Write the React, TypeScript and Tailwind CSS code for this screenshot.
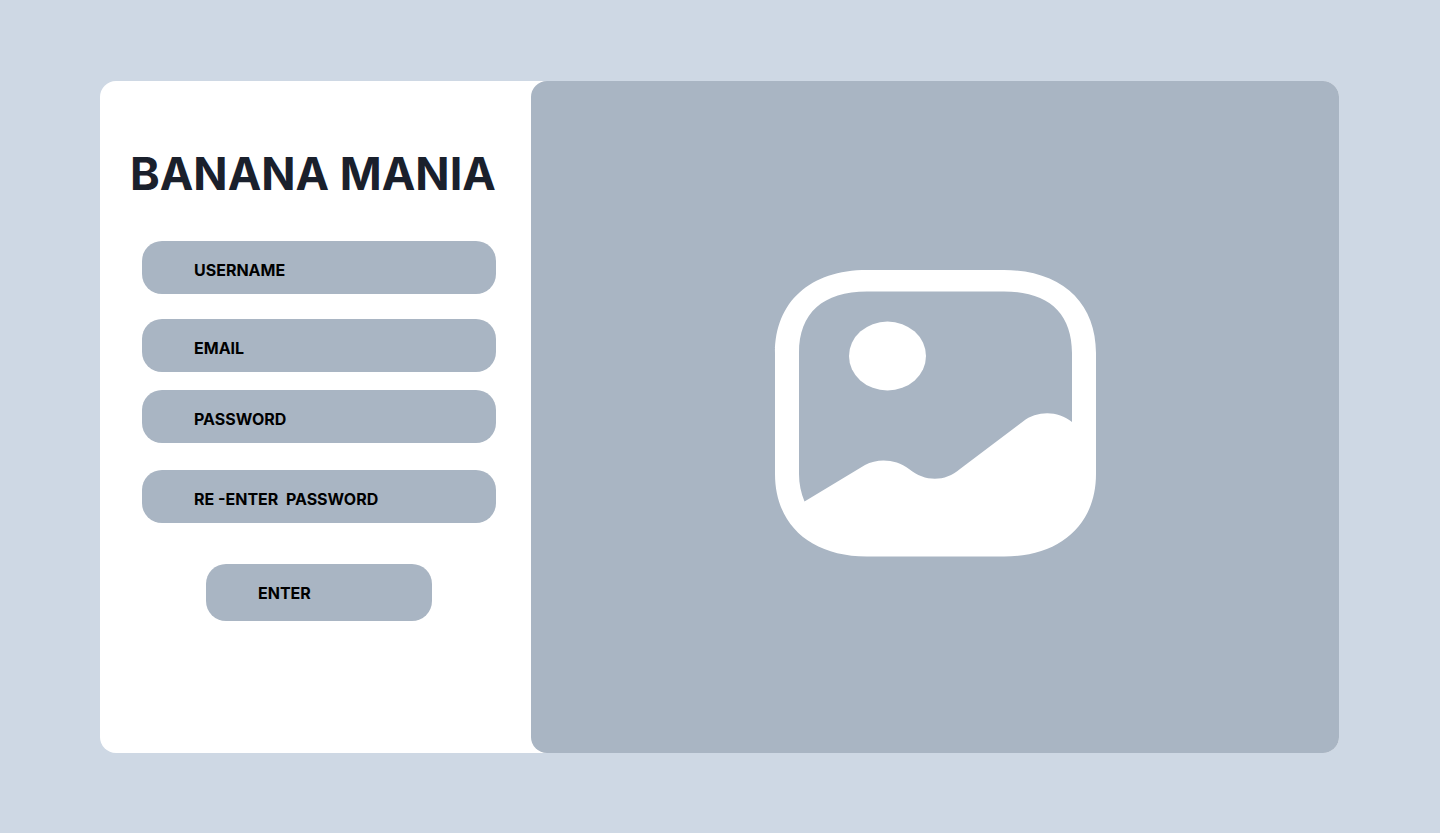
const field =
  "h-[53px] w-full rounded-[20px] bg-[#a9b5c3] pl-13 pr-5 pt-1 text-base font-bold text-black outline-none placeholder:text-black placeholder:opacity-100";

function Landscape() {
  return (
    <svg viewBox="0 0 322 288" className="w-[322px] max-w-[60%]" fill="white" role="img" aria-label="Image placeholder">
      <path
        fillRule="evenodd"
        d="M93 1H230C287 1 322 33 322 84V205C322 255 287 287.500 230 287.500H93C36 287.500 1 255 1 205V84C1 33 36 1 93 1ZM93 22.500C49 22.500 25 44 25 84V205C25 215 27 224 30.500 232.500L91 196C104 189 122 190 135 200C151 213 171 213 186 200L249 152.500C263 141.500 284 141.500 298 153V84C298 44 274 22.500 230 22.500Z"
      />
      <ellipse cx="113.500" cy="87" rx="38.500" ry="34.500" />
    </svg>
  );
}

export default function App() {
  return (
    <main className="flex min-h-screen bg-[#ced8e4] pt-[81px] pr-[101px] pb-20 pl-[100px] font-[Inter,sans-serif]">
      <div className="flex grow rounded-2xl bg-white">
        <form className="flex w-[431px] shrink-0 flex-col pt-[65px]" onSubmit={(e) => e.preventDefault()}>
          <h1 className="pl-[30px] text-[45px] leading-[56px] font-bold whitespace-nowrap text-[#1a202c]">BANANA MANIA</h1>
          <div className="flex flex-col pt-[39px] pr-[35px] pl-[42px]">
            <input aria-label="Username" placeholder="USERNAME" className={field} />
            <input aria-label="Email" type="email" placeholder="EMAIL" className={`${field} mt-[25px]`} />
            <input aria-label="Password" type="password" placeholder="PASSWORD" className={`${field} mt-[18px]`} />
            <input aria-label="Re-enter password" type="password" placeholder="RE -ENTER  PASSWORD" className={`${field} mt-[27px]`} />
            <button type="submit" className="mt-[41px] h-[57px] w-[226px] self-center rounded-[20px] bg-[#a9b5c3] pt-px pl-13 text-left text-base font-bold text-black">
              ENTER
            </button>
          </div>
        </form>
        <div className="flex grow items-center justify-center rounded-2xl bg-[#a9b5c3] pb-2">
          <Landscape />
        </div>
      </div>
    </main>
  );
}
